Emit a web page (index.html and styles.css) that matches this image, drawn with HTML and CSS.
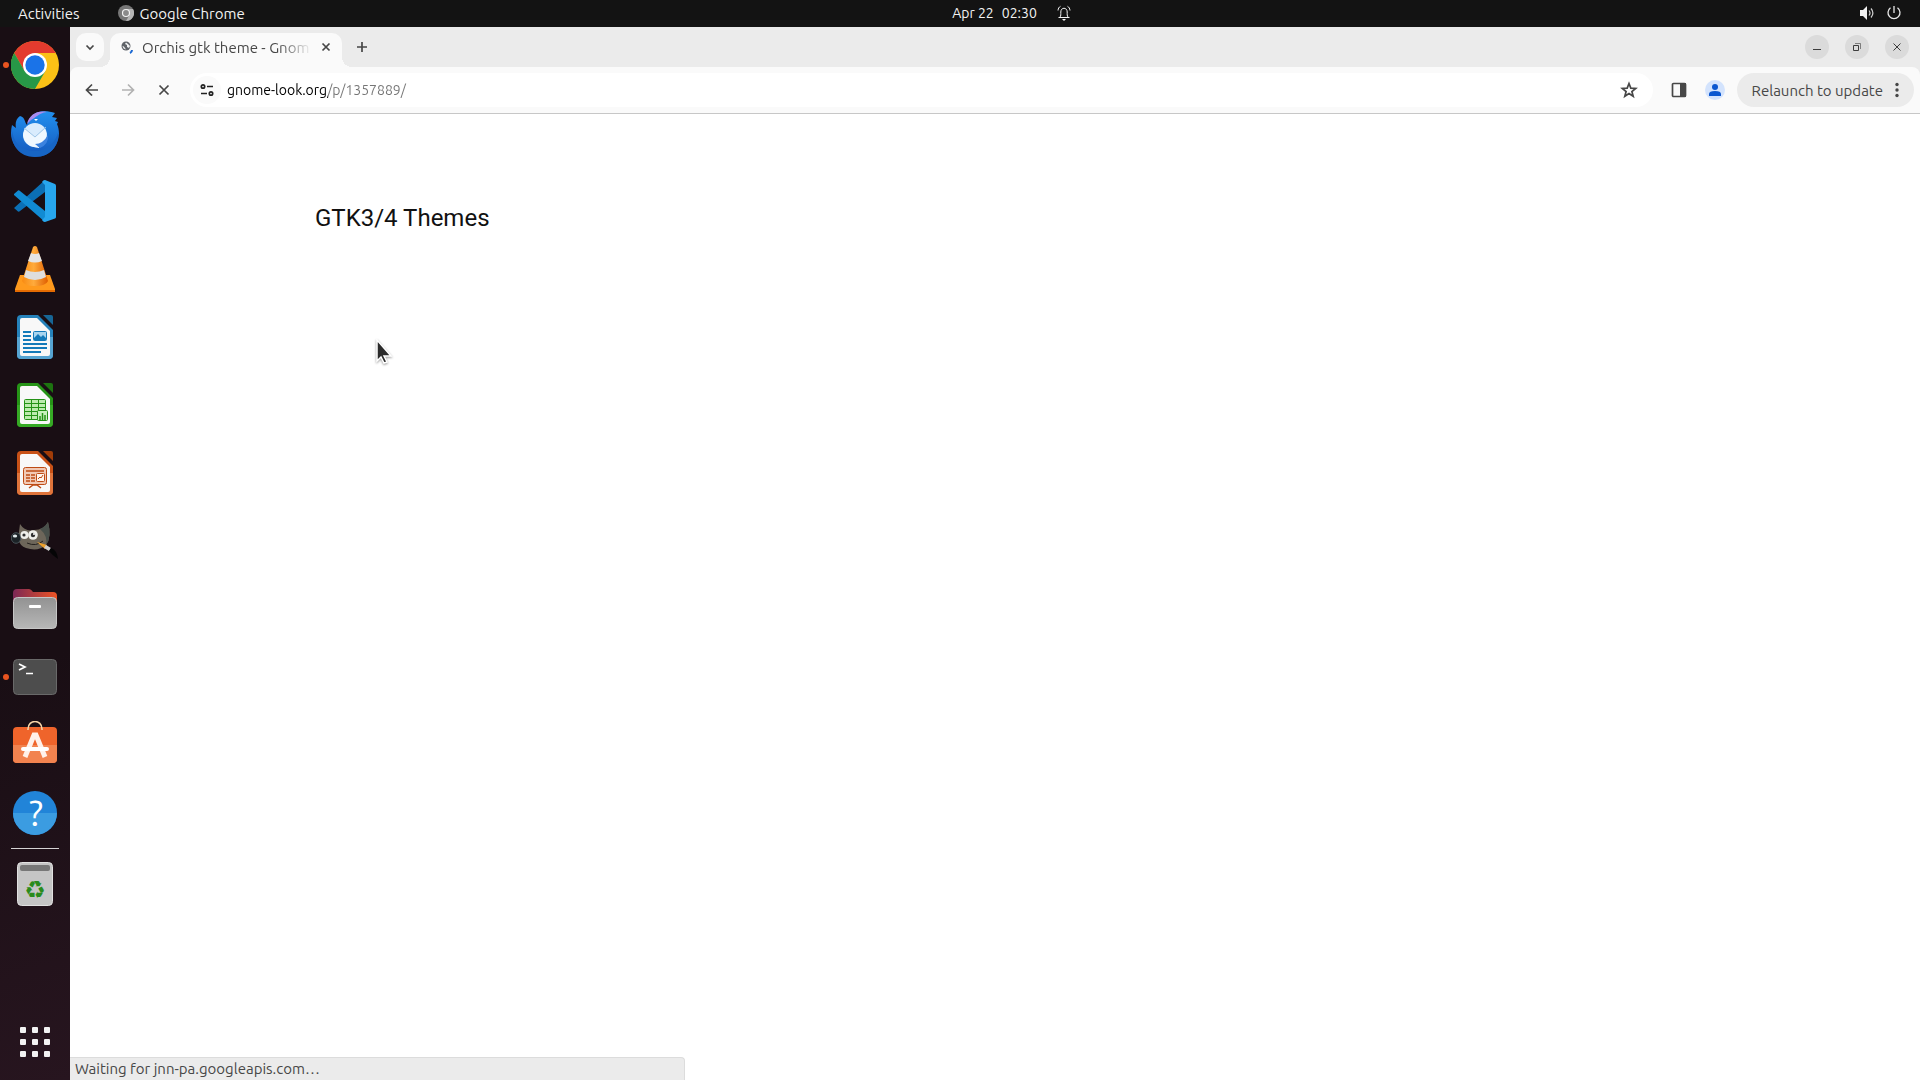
FILE: index.html
```html
<!DOCTYPE html>
<html lang="en">
<head>
  <meta charset="UTF-8">
  <meta name="viewport" content="width=device-width, initial-scale=1.0">
  <title>Orchis gtk theme - Gnome-look.org</title>
  <link rel="stylesheet" href="styles.css">
</head>
<body>

  <header class="topbar">
    <div class="topbar-left">
      <button class="top-item">Activities</button>
      <button class="top-item app-menu">
        <svg width="16" height="16" viewBox="0 0 16 16"><circle cx="8" cy="8" r="8" fill="#777"/><path d="M8 4h7A8 8 0 0 1 8 16l3.500-6z" fill="#b4b4b4"/><circle cx="8" cy="8" r="3.500" fill="#8a8a8a" stroke="#f2f2f2" stroke-width="1.200"/></svg>
        Google Chrome
      </button>
    </div>
    <button class="top-item clock">
      <span>Apr 22</span><span>02:30</span>
      <svg width="16" height="16" viewBox="0 0 16 16" fill="none" stroke="#f2f2f2"><path d="M2.500 12.500h11M4 12c1-1 .8-3 .8-5 0-5 6.400-5 6.400 0 0 2-.2 4 .8 5M4.500 1.300C3 2 2.200 3.500 2 5.500M11.500 1.300c1.500.7 2.300 2.200 2.500 4.200"/><path d="M6 14h4l-2 2z" fill="#f2f2f2" stroke="none"/></svg>
    </button>
    <button class="top-item system" aria-label="System">
      <svg width="16" height="16" viewBox="0 0 16 16"><path d="M1 5h3l4-4v14l-4-4H1z" fill="#f2f2f2"/><path d="M10 5.500q2 2.500 0 5M12 3.500q3.800 4.500 0 9" fill="none" stroke="#d0d0d0" stroke-width="1.200"/></svg>
      <svg width="16" height="16" viewBox="0 0 16 16" fill="none" stroke="#e8e8e8" stroke-width="1.300"><path d="M8 1v7M4.500 2.800a6 6 0 1 0 7 0"/></svg>
    </button>
  </header>

  <div class="desktop">
    <nav class="dock">
      <button class="launcher running" aria-label="Google Chrome">
        <svg viewBox="0 0 48 48">
          <circle cx="24" cy="24" r="24" fill="#fbc116"/>
          <path d="M3.200 12A24 24 0 0 1 44.800 12H24L13.600 30z" fill="#e33b2e"/>
          <path d="M3.200 12A24 24 0 0 0 24 48L34.400 30H13.600z" fill="#279847"/>
          <circle cx="24" cy="24" r="12" fill="#fff"/><circle cx="24" cy="24" r="9.700" fill="#1a73e8"/>
        </svg>
      </button>
      <button class="launcher" aria-label="Thunderbird">
        <svg viewBox="0 0 48 48">
          <defs><linearGradient id="bird" x1="0" y1="0" x2="0" y2="1"><stop offset="0" stop-color="#2290ef"/><stop offset="1" stop-color="#1458bd"/></linearGradient></defs>
          <path d="M9 7C5 10 4 14 5 19L1 16C-1 25 0 31 4 37C14 51 35 51 43 39C49 31 49 22 46 15L47 13L44 12L46 9L41 8L44 4C35 1 25 2 21 7C18 10 17 13 16 16C13 13 15 9 9 7z" fill="url(#bird)"/>
          <path d="M1 22C3 33 9 41 22 42C35 43 44 34 47 24C48 36 40 48 24 48C8 48 0 36 1 22z" fill="#1765c5"/>
          <path d="M16 15C18 6 26 1 36 3C27 4 25 9 20 11z" fill="#a98cef"/>
          <circle cx="24" cy="26" r="12" fill="#d9ecfd"/>
          <path d="M14 20L24 28L34 20Q36 24 35 29Q33 36 26 37Q29 38 28 39Q14 38 12 26z" fill="#eff8ff"/>
          <path d="M13 19L24 28L35 18" fill="none" stroke="#9fc6e8" stroke-width="1"/>
          <path d="M24 35Q32 35 37 26Q38 35 29 39z" fill="#3b82df"/>
          <path d="M23 10l4 0-2 2z" fill="#fff"/>
        </svg>
      </button>
      <button class="launcher" aria-label="Visual Studio Code">
        <svg viewBox="0 0 48 48">
          <path d="M3 31L7 34.500Q8 35 9 34L34 15V3z" fill="#0b6fb5"/>
          <path d="M3 17L7 13.500Q8 13 9 14L34 34V45L3 18z" fill="#118bd3"/>
          <path d="M34 3L44 7Q45 7.500 45 9V40Q45 41 44 41.500L34 45Q32 45 31 43L34 40V8L31 5Q32 3 34 3z" fill="#27a6ee"/>
        </svg>
      </button>
      <button class="launcher" aria-label="VLC media player">
        <svg viewBox="0 0 48 48">
          <defs><linearGradient id="cone" x1="0" x2="1"><stop offset="0" stop-color="#f88b12"/><stop offset=".45" stop-color="#ffab3c"/><stop offset="1" stop-color="#df5e00"/></linearGradient></defs>
          <path d="M9 30H39L44 44V46H4V44z" fill="#ff9a1d"/><path d="M4 45H44V47H4z" fill="#e56b02"/>
          <path d="M22 2Q24 0 26 2L37 36Q35 41 24 41Q13 41 11 36z" fill="url(#cone)"/>
          <path d="M20 8Q24 10 28 8L31 16Q24 19 17 16z" fill="#e5e5e5"/><path d="M15 25Q24 29 33 25L35 32Q24 38 13 32z" fill="#dedede"/>
        </svg>
      </button>
      <button class="launcher" aria-label="LibreOffice Writer">
        <svg viewBox="0 0 48 48">
          <path d="M32 2H40Q42 2 42 4V12z" fill="#176696"/>
          <path d="M10 2H27L42 17V42Q42 46 38 46H10Q6 46 6 42V6Q6 2 10 2z" fill="#2582bb"/><path d="M6 24H42V42Q42 46 38 46H10Q6 46 6 42z" fill="#56a4d2"/>
          <path d="M11 5H26L39 18V41Q39 43 37 43H11Q9 43 9 41V7Q9 5 11 5z" fill="#f8f8f8"/>
          <path d="M12 19H20M12 23H20M12 27H20M12 31H36M12 35H36M12 39H30" stroke="#147ab9" stroke-width="2"/>
          <rect x="22.500" y="18.500" width="13" height="9" rx="1" fill="#a9d5ef" stroke="#147ab9"/><path d="M23 27V25L27 21L30 24L32 22L35 25V27z" fill="#147ab9"/>
        </svg>
      </button>
      <button class="launcher" aria-label="LibreOffice Calc">
        <svg viewBox="0 0 48 48">
          <path d="M32 2H40Q42 2 42 4V12z" fill="#1d7310"/>
          <path d="M10 2H27L42 17V42Q42 46 38 46H10Q6 46 6 42V6Q6 2 10 2z" fill="#269417"/><path d="M6 24H42V42Q42 46 38 46H10Q6 46 6 42z" fill="#36aa25"/>
          <path d="M11 5H26L39 18V41Q39 43 37 43H11Q9 43 9 41V7Q9 5 11 5z" fill="#f8f8f8"/>
          <rect x="13.500" y="18.500" width="21" height="20" rx="1" fill="#bceaae" stroke="#249216"/>
          <path d="M14 22.500H34M14 26.500H34M14 30.500H34M14 34.500H34M20.500 19V38M27.500 19V38" stroke="#249216"/>
          <rect x="26.500" y="29.500" width="10" height="10" rx="1" fill="#c8f0bc" stroke="#249216"/><path d="M29 39V35M31.500 39V32M34 39V34" stroke="#249216" stroke-width="1.500"/>
        </svg>
      </button>
      <button class="launcher" aria-label="LibreOffice Impress">
        <svg viewBox="0 0 48 48">
          <path d="M32 2H40Q42 2 42 4V12z" fill="#a13c08"/>
          <path d="M10 2H27L42 17V42Q42 46 38 46H10Q6 46 6 42V6Q6 2 10 2z" fill="#c85117"/><path d="M6 24H42V42Q42 46 38 46H10Q6 46 6 42z" fill="#df743b"/>
          <path d="M11 5H26L39 18V41Q39 43 37 43H11Q9 43 9 41V7Q9 5 11 5z" fill="#f8f8f8"/>
          <rect x="12.500" y="18.500" width="23" height="17" rx="2" fill="#f1c9b5" stroke="#bd4b15"/>
          <path d="M15 22H33M15 26H19M15 29H19M15 32H19M20 26H24M20 29H24M20 32H24M18 39L22 36H26L30 39" fill="none" stroke="#bd4b15" stroke-width="1.500"/>
          <rect x="25.500" y="24.500" width="8" height="8" rx="1" fill="#fff4ec" stroke="#bd4b15"/><path d="M27 30L29 28L30 29L32 26" fill="none" stroke="#bd4b15"/>
        </svg>
      </button>
      <button class="launcher" aria-label="GIMP">
        <svg viewBox="0 0 48 48">
          <path d="M9 7Q14 15 23 13Q33 13 37 5Q41 20 35 28Q27 35 15 31Q9 29 7 22z" fill="#6d665a"/>
          <path d="M29 12Q35 9 37 5Q41 20 35 28Q37 19 29 12z" fill="#49504b"/>
          <path d="M16 26Q25 30 32 24" stroke="#24211e" fill="none"/>
          <ellipse cx="5" cy="21" rx="4.700" ry="5.300" fill="#1b2226" stroke="#465157"/><ellipse cx="4" cy="19" rx="2.200" ry="1.500" fill="#e0e8ea"/>
          <circle cx="13.500" cy="18" r="4" fill="#efefea"/><circle cx="22" cy="18" r="4.800" fill="#efefea"/><circle cx="13" cy="18" r="1.600" fill="#303030"/><circle cx="22" cy="18" r="2.200" fill="#303030"/><circle cx="23" cy="17" r="1" fill="#fff"/>
          <path d="M26 25L36 28L34 32z" fill="#eea12b"/><path d="M35 28L40 31L38 34L33 31z" fill="#d0d0d0"/><path d="M40 31Q46 33 47 42Q41 38 38 34z" fill="#050506"/>
        </svg>
      </button>
      <button class="launcher" aria-label="Files">
        <svg viewBox="0 0 48 48">
          <defs><linearGradient id="folder" x1="0" x2="1"><stop offset="0" stop-color="#7b2855"/><stop offset="1" stop-color="#ee5425"/></linearGradient><linearGradient id="metal" x1="0" y1="0" x2="0" y2="1"><stop offset="0" stop-color="#929292"/><stop offset="1" stop-color="#b7b7b7"/></linearGradient></defs>
          <path d="M6 4H18Q20 4 22 7H42Q46 7 46 11V30H2V8Q2 4 6 4z" fill="url(#folder)"/>
          <rect x="2.500" y="12.500" width="43" height="31" rx="4" fill="url(#metal)" stroke="#c6c6c6"/><rect x="18" y="20" width="12" height="3" rx="1" fill="#fff"/>
        </svg>
      </button>
      <button class="launcher running" aria-label="Terminal">
        <svg viewBox="0 0 48 48"><rect x="2.500" y="6.500" width="43" height="35" rx="4" fill="#4d4d4d" stroke="#696969"/><path d="M8 11L14 14L8 17M15 20.500H22" stroke="#fff" stroke-width="1.700" fill="none"/></svg>
      </button>
      <button class="launcher" aria-label="Ubuntu Software">
        <svg viewBox="0 0 48 48">
          <rect x="2" y="6" width="44" height="36" rx="4" fill="#ef642b"/><path d="M2 24H46V38Q46 42 42 42H6Q2 42 2 38z" fill="#f2834f"/>
          <path d="M17 9V8C17-2 31-2 31 8V9" fill="none" stroke="#f8d6a9" stroke-width="1.500"/>
          <path d="M14 36L23 14H25L34 36" fill="none" stroke="#fff1ea" stroke-width="5"/><rect x="10" y="26" width="28" height="4" rx="2" fill="#fff"/>
        </svg>
      </button>
      <button class="launcher" aria-label="Help">
        <svg viewBox="0 0 48 48"><circle cx="24" cy="24" r="22" fill="#2184d8"/><path d="M2 24A22 22 0 0 0 46 24z" fill="#3b9ce1"/><text x="25" y="37" text-anchor="middle" class="help-mark">?</text></svg>
      </button>
      <hr class="separator">
      <button class="launcher" aria-label="Trash">
        <svg viewBox="0 0 48 48"><rect x="6.500" y="2.500" width="35" height="43" rx="4" fill="#c5c5c5" stroke="#e1e1e1"/><rect x="9" y="5" width="30" height="6" rx="2" fill="#777"/><text x="24" y="38" text-anchor="middle" class="recycle">♻</text></svg>
      </button>
      <button class="launcher show-apps" aria-label="Show Applications">
        <svg viewBox="0 0 48 48" fill="#f2f2f2"><rect x="9" y="9" width="6" height="6" rx="1"/><rect x="21" y="9" width="6" height="6" rx="1"/><rect x="33" y="9" width="6" height="6" rx="1"/><rect x="9" y="21" width="6" height="6" rx="1"/><rect x="21" y="21" width="6" height="6" rx="1"/><rect x="33" y="21" width="6" height="6" rx="1"/><rect x="9" y="33" width="6" height="6" rx="1"/><rect x="21" y="33" width="6" height="6" rx="1"/><rect x="33" y="33" width="6" height="6" rx="1"/></svg>
      </button>
    </nav>

    <div class="browser">
      <div class="tabstrip">
        <button class="tab-search" aria-label="Search tabs"><svg width="12" height="12" viewBox="0 0 12 12"><path d="M2.500 4.500L6 8l3.500-3.500" class="line"/></svg></button>
        <div class="tab">
          <svg width="14" height="14" viewBox="0 0 14 14"><circle cx="6" cy="6" r="4.500" fill="#5f6368"/><path d="M2.500 6Q4 6 5 8l1 1.500Q3 9 2.500 6zM6 2.500L5 4l2 1 0 2 2 1 1-2-2-2z" fill="#f1f2f3"/><path d="M10 13Q12 12 12 10" fill="none" stroke="#1967d2" stroke-width="2"/></svg>
          <span class="tab-title">Orchis gtk theme - Gnom</span>
          <button class="tab-close" aria-label="Close tab"><svg width="12" height="12" viewBox="0 0 12 12"><path d="M2.500 2.500l7 7M9.500 2.500l-7 7" class="line"/></svg></button>
        </div>
        <button class="new-tab" aria-label="New tab"><svg width="12" height="12" viewBox="0 0 12 12"><path d="M6 1v10M1 6h10" class="line"/></svg></button>
        <div class="window-controls">
          <button aria-label="Minimize"><svg width="10" height="10" viewBox="0 0 10 10"><path d="M1 7.500h8" class="thin"/></svg></button>
          <button aria-label="Restore"><svg width="10" height="10" viewBox="0 0 10 10"><path d="M1.500 3.500h5v5h-5z" class="thin"/><path d="M3 1.500h5.500V7" class="thin" opacity=".6"/></svg></button>
          <button aria-label="Close"><svg width="10" height="10" viewBox="0 0 10 10"><path d="M1.500 1.500l7 7M8.500 1.500l-7 7" class="thin"/></svg></button>
        </div>
      </div>

      <div class="toolbar">
        <button class="tool" aria-label="Back"><svg width="16" height="16" viewBox="0 0 16 16"><path d="M14 8H3M8 2.500L2.500 8 8 13.500" class="line"/></svg></button>
        <button class="tool" aria-label="Forward" disabled><svg width="16" height="16" viewBox="0 0 16 16"><path d="M2 8h11M8 2.500L13.500 8 8 13.500" class="line"/></svg></button>
        <button class="tool" aria-label="Stop"><svg width="16" height="16" viewBox="0 0 16 16"><path d="M3.500 3.500l9 9M12.500 3.500l-9 9" class="line"/></svg></button>
        <div class="omnibox">
          <button class="site-info" aria-label="View site information"><svg width="16" height="16" viewBox="0 0 16 16" fill="none" stroke="#222" stroke-width="1.700"><circle cx="4" cy="4.500" r="1.700"/><path d="M8 4.500h6M2 11.500h6"/><circle cx="12" cy="11.500" r="1.700"/></svg></button>
          <input class="url" type="text" value="gnome-look.org/p/1357889/" aria-label="Address and search bar">
          <button class="star" aria-label="Bookmark this tab"><svg width="18" height="18" viewBox="0 0 18 18"><path d="M9 2.500l1.800 4.600 4.900.3-3.800 3.100 1.300 4.800L9 12.600l-4.200 2.700 1.300-4.800-3.800-3.100 4.900-.3z" class="line"/></svg></button>
        </div>
        <button class="tool" aria-label="Side panel"><svg width="16" height="16" viewBox="0 0 16 16"><rect x="1.500" y="1.500" width="13" height="13" rx="1" class="line"/><path d="M9 1h6v14H9z" fill="#474747"/></svg></button>
        <button class="tool" aria-label="Profile"><svg width="20" height="20" viewBox="0 0 20 20"><circle cx="10" cy="10" r="10" fill="#d3e3fd"/><circle cx="10" cy="7" r="3" fill="#0b57d0"/><path d="M4 16v-2q0-3 6-3t6 3v2z" fill="#0b57d0"/></svg></button>
        <button class="relaunch">Relaunch to update <svg width="4" height="16" viewBox="0 0 4 16" fill="#474747"><circle cx="2" cy="2.500" r="1.700"/><circle cx="2" cy="8" r="1.700"/><circle cx="2" cy="13.500" r="1.700"/></svg></button>
      </div>

      <main class="page">
        <h1>GTK3/4 Themes</h1>
        <div class="status">Waiting for jnn-pa.googleapis.com…</div>
        <svg class="pointer" width="20" height="28" viewBox="0 0 20 28"><path d="M1 1v21l4-4 3 6 3-1-3-6h7z" fill="#2b2b2b" stroke="#fff" stroke-width="1.500"/></svg>
      </main>
    </div>
  </div>

</body>
</html>
```
FILE: styles.css
```css
* {
  box-sizing: border-box;
}

body {
  margin: 0;
  height: 100vh;
  display: flex;
  flex-direction: column;
  overflow: hidden;
  font-family: Ubuntu, "Noto Sans", sans-serif;
  font-size: 15px;
  color: #474747;
  background: #fff;
}

button {
  display: flex;
  align-items: center;
  justify-content: center;
  flex-shrink: 0;
  padding: 0;
  border: none;
  background: none;
  color: inherit;
  font: inherit;
}

svg {
  display: block;
  flex-shrink: 0;
}

.line {
  fill: none;
  stroke: #474747;
  stroke-width: 1.7;
}

.thin {
  fill: none;
  stroke: #3d3d3d;
}

/* system bar */
.topbar {
  display: grid;
  grid-template-columns: 1fr auto 1fr;
  height: 27px;
  padding: 0 18px 1px;
  background: #131313;
  color: #f2f2f2;
}

.topbar-left {
  display: flex;
  gap: 38px;
}

.app-menu {
  gap: 6px;
}

.clock {
  gap: 8px;
  margin-left: 104px;
  font-size: 14px;
}

.clock svg {
  margin-left: 11px;
}

.system {
  gap: 11px;
  justify-self: end;
}

.desktop {
  display: flex;
  flex: 1;
  min-height: 0;
}

/* dock */
.dock {
  display: flex;
  flex-direction: column;
  align-items: center;
  gap: 20px;
  width: 70px;
  padding: 14px 0;
  background: linear-gradient(160deg, #190e14 60%, #27151f);
}

.launcher {
  position: relative;
  width: 48px;
  height: 48px;
}

.launcher svg {
  width: 48px;
  height: 48px;
}

.running::before {
  content: "";
  position: absolute;
  left: -8px;
  top: 21px;
  width: 6px;
  height: 6px;
  border-radius: 50%;
  background: #e95420;
}

.separator {
  width: 48px;
  margin: -9px 0;
  border: none;
  border-top: 1px solid #d5d3d4;
}

.show-apps {
  margin-top: auto;
}

.help-mark {
  font: 36px Ubuntu, "Noto Sans", sans-serif;
  fill: #fff;
}

.recycle {
  font: 24px "DejaVu Sans", sans-serif;
  fill: #2a8b1c;
}

/* browser */
.browser {
  display: flex;
  flex: 1;
  flex-direction: column;
  min-width: 0;
  background: #ebebeb;
}

.tabstrip {
  display: flex;
  height: 40px;
  padding: 6px 11px 0 6px;
}

.tab-search {
  width: 28px;
  height: 28px;
  margin-right: 6px;
  border-radius: 10px;
  background: #fafafa;
}

.tab {
  position: relative;
  display: flex;
  align-items: center;
  width: 232px;
  padding: 0 10px 6px 10px;
  border-radius: 10px 10px 0 0;
  background: #fafafa;
}

.tab::before,
.tab::after {
  content: "";
  position: absolute;
  bottom: 0;
  width: 10px;
  height: 10px;
}

.tab::before {
  right: 100%;
  background: radial-gradient(circle at 0 0, transparent 10px, #fafafa 10px);
}

.tab::after {
  left: 100%;
  background: radial-gradient(circle at 100% 0, transparent 10px, #fafafa 10px);
}

.tab-title {
  flex: 1;
  margin: 0 8px;
  white-space: nowrap;
  mask-image: linear-gradient(to right, #000 80%, transparent);
}

.tab-close {
  width: 12px;
}

.new-tab {
  width: 28px;
  height: 28px;
  margin-left: 6px;
}

.window-controls {
  display: flex;
  gap: 16px;
  margin: 2px 0 0 auto;
}

.window-controls button {
  width: 24px;
  height: 24px;
  border-radius: 50%;
  background: #dbdbdb;
}

.toolbar {
  display: flex;
  align-items: center;
  gap: 8px;
  height: 47px;
  padding: 0 6px 0 8px;
  border-bottom: 1px solid #c7c7c7;
  border-radius: 8px 8px 0 0;
  background: #fafafa;
}

.tool {
  width: 28px;
  height: 28px;
}

.tool:disabled {
  opacity: .4;
}

.omnibox {
  display: flex;
  flex: 1;
  align-items: center;
  height: 34px;
  margin: 0 4px;
  padding: 0 15px 0 3px;
  border-radius: 17px;
  background: #fff;
}

.site-info {
  width: 28px;
  height: 28px;
  border-radius: 50%;
  background: #fafafa;
}

/* the host part of the address is darker than the path */
.url {
  flex: 1;
  min-width: 0;
  height: 24px;
  margin: 0 6px;
  padding: 0;
  border: none;
  outline: none;
  font: inherit;
  font-size: 14px;
  color: transparent;
  background: linear-gradient(to right, #000 101px, #757575 101px);
  background-clip: text;
}

.relaunch {
  gap: 12px;
  height: 34px;
  padding: 0 15px;
  border-radius: 17px;
  background: #ebebeb;
}

/* page */
.page {
  position: relative;
  flex: 1;
  background: #fff;
}

h1 {
  margin: 0;
  padding: 88px 245px;
  font: 24px/32px Roboto, sans-serif;
  color: #111;
}

.status {
  position: absolute;
  left: 0;
  bottom: 0;
  width: 615px;
  height: 23px;
  padding: 0 5px;
  border: 1px solid #dcdcdc;
  border-width: 1px 1px 0 0;
  border-radius: 0 4px 0 0;
  line-height: 21px;
  background: #ebebeb;
}

.pointer {
  position: absolute;
  left: 306px;
  top: 225px;
  filter: drop-shadow(0 1px 1px #0006);
}
```
